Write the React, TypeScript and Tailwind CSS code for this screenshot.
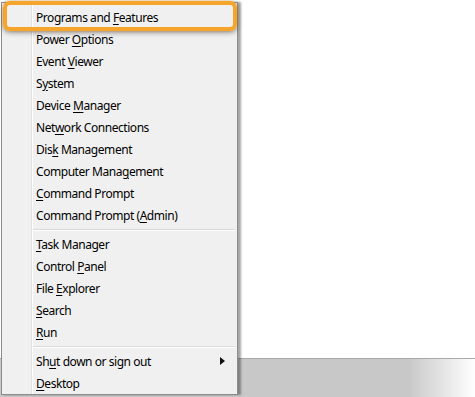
import React from "react";

type Item = { pre: string; key: string; post: string; arrow?: boolean };

const groups: Item[][] = [
  [
    { pre: "Programs and ", key: "F", post: "eatures" },
    { pre: "Power ", key: "O", post: "ptions" },
    { pre: "Event ", key: "V", post: "iewer" },
    { pre: "S", key: "y", post: "stem" },
    { pre: "Device ", key: "M", post: "anager" },
    { pre: "Net", key: "w", post: "ork Connections" },
    { pre: "Dis", key: "k", post: " Management" },
    { pre: "Computer Mana", key: "g", post: "ement" },
    { pre: "", key: "C", post: "ommand Prompt" },
    { pre: "Command Prompt (", key: "A", post: "dmin)" },
  ],
  [
    { pre: "", key: "T", post: "ask Manager" },
    { pre: "Control ", key: "P", post: "anel" },
    { pre: "File ", key: "E", post: "xplorer" },
    { pre: "", key: "S", post: "earch" },
    { pre: "", key: "R", post: "un" },
  ],
  [
    { pre: "Sh", key: "u", post: "t down or sign out", arrow: true },
    { pre: "", key: "D", post: "esktop" },
  ],
];

const Row = ({ item }: { item: Item }) => (
  <div className="h-[22px] flex items-center justify-between pt-[2px] pl-[3px] pr-[12px]">
    <span className="text-[12px] tracking-[-0.45px] text-black leading-none whitespace-nowrap">
      {item.pre}
      <u className="underline-offset-2">{item.key}</u>
      {item.post}
    </span>
    {item.arrow && (
      <svg width="5" height="8" viewBox="0 0 5 8" className="-mt-[2px]">
        <path d="M0 0 L5 4 L0 8 Z" fill="#111" />
      </svg>
    )}
  </div>
);

export default function App() {
  return (
    <div
      className="w-[475px] h-[397px] bg-white relative overflow-hidden"
      style={{ fontFamily: '"Noto Sans", "Open Sans", sans-serif' }}
    >
      {/* taskbar behind the menu */}
      <div className="absolute left-0 top-[358px] w-[475px] h-[39px] border-t border-[#a9a9a9] bg-[linear-gradient(to_right,#c8c8c8_0%,#c8c8c8_86%,#ffffff_100%)]" />

      <div className="relative ml-[1px] mt-[2px] w-[237px] h-[393px] border border-[#8c8c8c] bg-[#f0f0f0] shadow-[3px_0_2px_rgba(0,0,0,0.35)] flex">
        <div className="w-[30px] shrink-0 border-r border-[#e0e0e0]" />
        <div className="flex-1 pt-[3px] border-l border-white">
          {groups.map((g, gi) => (
            <div key={gi}>
              {gi > 0 && (
                <div className="h-[7px] flex items-center pr-[2px]">
                  <div className="w-full h-[2px] border-t border-[#d9d9d9] border-b border-b-white" />
                </div>
              )}
              {g.map((it, i) => (
                <Row key={i} item={it} />
              ))}
            </div>
          ))}
        </div>
      </div>

      {/* highlight around the first entry */}
      <div className="absolute left-[3px] top-[1px] w-[234px] h-[30px] rounded-[7px] border-[4px] border-[#f6a52c] shadow-[0_2px_5px_rgba(0,0,0,0.35),0_0_3px_rgba(246,165,44,0.6)]" />
    </div>
  );
}
